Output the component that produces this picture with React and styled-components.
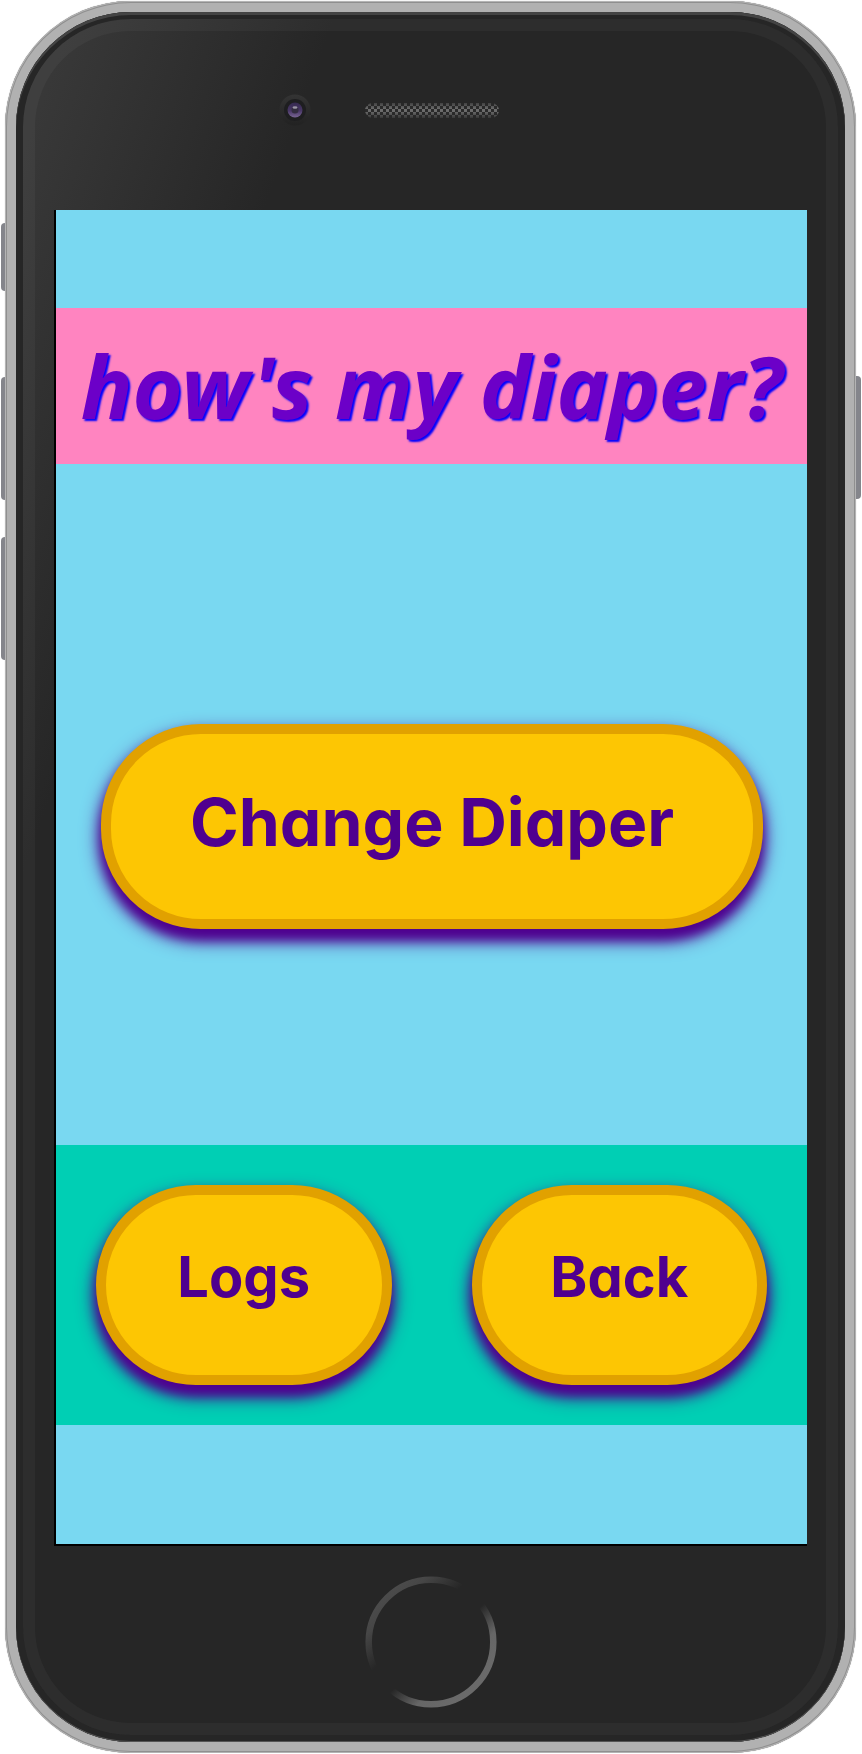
import React from "react";
import styled, { createGlobalStyle } from "styled-components";

const GlobalStyle = createGlobalStyle`
  * { box-sizing: border-box; }
  body { margin: 0; background: #fff; }
`;

const Stage = styled.div`
  padding: 1px 6px 0 5px;
`;

const Frame = styled.div`
  position: relative;
  padding: 11px;
  border-radius: 126px;
  background: #b1b1b1;
  box-shadow: inset 0 0 0 1px #b4b4b4, inset 0 0 0 2px #8f8f8f, 0 0 1px #aaa;
`;

const SideButton = styled.span`
  position: absolute;
  top: ${(p) => p.$top}px;
  ${(p) => (p.$side === "left" ? "left: -4px" : "right: -5px")};
  width: ${(p) => (p.$side === "left" ? 4 : 5)}px;
  height: ${(p) => p.$height}px;
  background: #84858b;
  border-radius: ${(p) => (p.$side === "left" ? "4px 0 0 4px" : "0 4px 4px 0")};
`;

const Body = styled.div`
  padding: 7px;
  border-radius: 115px;
  background: linear-gradient(110deg, #3c3c3c, #262626 22%);
  box-shadow: inset 0 3px 0 #444, inset 0 -1px 0 #555, inset 0 0 0 7px #262626;
`;

const Face = styled.div`
  border: 12px solid rgba(255, 255, 255, 0.035);
  border-radius: 108px;
  padding: 0 19px;
`;

const Header = styled.div`
  display: grid;
  grid-template-columns: 1fr auto 1fr;
  align-items: center;
  height: 179px;
  padding: 0 0 21px 2px;
`;

const Camera = styled.svg`
  justify-self: end;
  margin-right: 54px;
  width: 32px;
  height: 32px;
`;

const Speaker = styled.div`
  width: 134px;
  height: 15px;
  border-radius: 8px;
  background:
    linear-gradient(rgba(38, 38, 38, 0.6), rgba(38, 38, 38, 0) 40%, rgba(38, 38, 38, 0) 55%, rgba(38, 38, 38, 0.75)),
    repeating-conic-gradient(#6c6c6c 0 25%, #2a2a2a 0 50%) 0 0 / 6px 6px;
`;

const Screen = styled.main`
  display: flex;
  flex-direction: column;
  padding: 98px 0 119px;
  background: #79d8f1;
  border-left: 2px solid #000;
  border-bottom: 2px solid #000;
`;

const TitleBar = styled.header`
  padding: 20px 0;
  background: #ff84c0;
  text-align: center;
`;

const Title = styled.h1`
  margin: 0;
  color: #6c00c8;
  font: italic 700 86px/116px "Noto Sans", "Open Sans", sans-serif;
  text-shadow: 2px 2px 2px #0000ff;
  white-space: nowrap;
`;

const ActionArea = styled.section`
  display: flex;
  padding: 260px 44px 216px 45px;
`;

const Footer = styled.nav`
  display: flex;
  gap: 80px;
  padding: 40px;
  background: #00cfb4;
`;

const PillButton = styled.button`
  flex: 1;
  min-width: 0;
  height: ${(p) => (p.$large ? 205 : 200)}px;
  padding: 0 0 ${(p) => (p.$large ? 10 : 16)}px;
  border: 10px solid #e1a100;
  border-radius: 100px;
  background: #fdc603;
  color: #4f008f;
  font: 700 ${(p) => (p.$large ? 66 : 56)}px/80px Inter, sans-serif;
  font-feature-settings: "cv11";
  white-space: nowrap;
  box-shadow: 0 10px 20px #4f008f, 0 10px 12px #4f008f;
  cursor: pointer;
`;

const Chin = styled.div`
  display: flex;
  justify-content: center;
  height: 177px;
  padding-top: 30px;
`;

const HomeButton = styled.button`
  width: 132px;
  height: 132px;
  padding: 0;
  border: 0;
  background: none;
  svg { display: block; }
`;

function FrontCamera() {
  return (
    <Camera viewBox="0 0 32 32" aria-hidden="true">
      <defs>
        <linearGradient id="rim" x1="0" y1="0" x2="0" y2="1">
          <stop offset="0" stopColor="#343434" />
          <stop offset="1" stopColor="#222" />
        </linearGradient>
        <linearGradient id="lens" x1="0" y1="0" x2="0" y2="1">
          <stop offset="0" stopColor="#35294f" />
          <stop offset="0.55" stopColor="#493766" />
          <stop offset="1" stopColor="#796594" />
        </linearGradient>
      </defs>
      <circle cx="16" cy="16" r="15.5" fill="url(#rim)" />
      <circle cx="16" cy="16" r="11" fill="#1e1e20" />
      <circle cx="16" cy="16" r="7.5" fill="url(#lens)" />
      <circle cx="16" cy="16" r="3.5" fill="#332d40" />
      <ellipse cx="16" cy="13.5" rx="2.5" ry="1.3" fill="#9c96a6" />
    </Camera>
  );
}

function HomeRing() {
  return (
    <svg width="132" height="132" viewBox="0 0 132 132" aria-hidden="true">
      <defs>
        <linearGradient id="ring" gradientUnits="userSpaceOnUse" x1="20" y1="20" x2="107" y2="112">
          <stop offset="0" stopColor="#4b4b4b" />
          <stop offset="0.12" stopColor="#464646" />
          <stop offset="0.36" stopColor="#262626" />
          <stop offset="0.58" stopColor="#262626" />
          <stop offset="0.8" stopColor="#666" />
          <stop offset="1" stopColor="#6a6a6a" />
        </linearGradient>
      </defs>
      <circle cx="66" cy="66" r="62.3" fill="none" stroke="url(#ring)" strokeWidth="6.5" />
    </svg>
  );
}

export default function App() {
  return (
    <Stage>
      <GlobalStyle />
      <Frame>
        <SideButton $side="left" $top={222} $height={68} />
        <SideButton $side="left" $top={376} $height={123} />
        <SideButton $side="left" $top={536} $height={123} />
        <SideButton $side="right" $top={375} $height={123} />
        <Body>
          <Face>
            <Header>
              <FrontCamera />
              <Speaker />
            </Header>
            <Screen>
              <TitleBar>
                <Title>how's my diaper?</Title>
              </TitleBar>
              <ActionArea>
                <PillButton type="button" $large>Change Diaper</PillButton>
              </ActionArea>
              <Footer>
                <PillButton type="button">Logs</PillButton>
                <PillButton type="button">Back</PillButton>
              </Footer>
            </Screen>
            <Chin>
              <HomeButton type="button" aria-label="Home">
                <HomeRing />
              </HomeButton>
            </Chin>
          </Face>
        </Body>
      </Frame>
    </Stage>
  );
}
